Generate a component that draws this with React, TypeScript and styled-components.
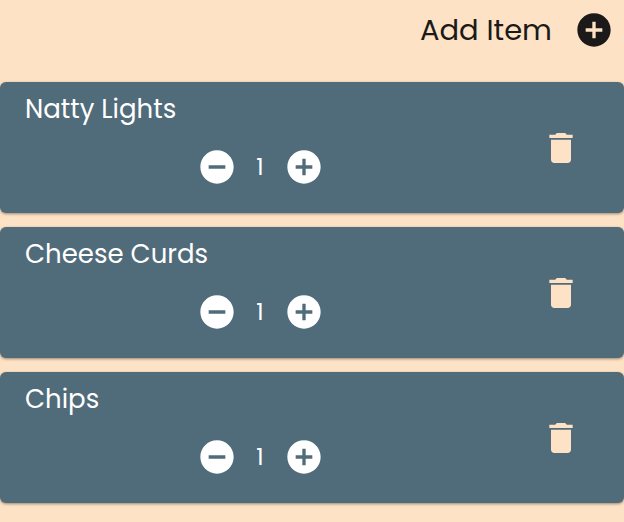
import React, { useState } from "react";
import styled, { createGlobalStyle } from "styled-components";
import { MdAddCircle, MdDelete, MdRemoveCircle } from "react-icons/md";

const GlobalStyle = createGlobalStyle`
  *, *::before, *::after { box-sizing: border-box; }
  body {
    margin: 0;
    background: #fee2c5;
    color: #1b1a19;
    font-family: Poppins, Inter, sans-serif;
  }
`;

const Header = styled.header`
  display: flex;
  justify-content: flex-end;
  padding: 10px 10px 32px 0;
`;

const AddButton = styled.button`
  display: flex;
  align-items: center;
  gap: 22px;
  height: 40px;
  padding: 0;
  border: 0;
  background: none;
  color: inherit;
  font: inherit;
  font-size: 29px;
  font-weight: 400;
  line-height: 40px;
  cursor: pointer;
`;

const List = styled.ul`
  display: flex;
  flex-direction: column;
  gap: 14px;
  margin: 0;
  padding: 0 0 18px;
  list-style: none;
`;

const Card = styled.li`
  display: grid;
  grid-template-columns: 5fr 1fr;
  align-items: center;
  border-radius: 6px;
  background: #506b79;
  color: #fff;
  box-shadow: 0 1px 3px rgba(0, 0, 0, 0.4);
`;

const Details = styled.div`
  display: flex;
  flex-direction: column;
  gap: 20px;
  padding: 9px 0 26px;
`;

const Name = styled.h2`
  margin: 0;
  padding-left: 25px;
  font-size: 26px;
  font-weight: 400;
  line-height: 36px;
`;

const Counter = styled.div`
  display: flex;
  align-items: center;
  justify-content: center;
`;

const Quantity = styled.output`
  width: 47px;
  font-size: 23px;
  line-height: 40px;
  text-align: center;
`;

const IconButton = styled.button<{ $tone?: string }>`
  display: flex;
  width: 40px;
  height: 40px;
  padding: 0;
  border: 0;
  background: none;
  color: ${({ $tone }) => $tone ?? "#fff"};
  cursor: pointer;
`;

const Actions = styled.div`
  padding-left: 21px;
`;

type Item = { id: number; name: string; quantity: number };

const initialItems: Item[] = [
  { id: 1, name: "Natty Lights", quantity: 1 },
  { id: 2, name: "Cheese Curds", quantity: 1 },
  { id: 3, name: "Chips", quantity: 1 },
];

export default function App() {
  const [items, setItems] = useState(initialItems);

  const change = (id: number, delta: number) =>
    setItems((list) =>
      list.map((item) =>
        item.id === id ? { ...item, quantity: Math.max(1, item.quantity + delta) } : item
      )
    );

  const remove = (id: number) => setItems((list) => list.filter((item) => item.id !== id));

  const add = () =>
    setItems((list) => [...list, { id: Date.now(), name: "New Item", quantity: 1 }]);

  return (
    <>
      <GlobalStyle />
      <Header>
        <AddButton type="button" onClick={add}>
          Add Item
          <MdAddCircle size={40} />
        </AddButton>
      </Header>
      <main>
        <List>
          {items.map((item) => (
            <Card key={item.id}>
              <Details>
                <Name>{item.name}</Name>
                <Counter>
                  <IconButton
                    type="button"
                    aria-label={`Decrease ${item.name}`}
                    onClick={() => change(item.id, -1)}
                  >
                    <MdRemoveCircle size={40} />
                  </IconButton>
                  <Quantity>{item.quantity}</Quantity>
                  <IconButton
                    type="button"
                    aria-label={`Increase ${item.name}`}
                    onClick={() => change(item.id, 1)}
                  >
                    <MdAddCircle size={40} />
                  </IconButton>
                </Counter>
              </Details>
              <Actions>
                <IconButton
                  type="button"
                  $tone="#fee2c5"
                  aria-label={`Delete ${item.name}`}
                  onClick={() => remove(item.id)}
                >
                  <MdDelete size={40} />
                </IconButton>
              </Actions>
            </Card>
          ))}
        </List>
      </main>
    </>
  );
}
